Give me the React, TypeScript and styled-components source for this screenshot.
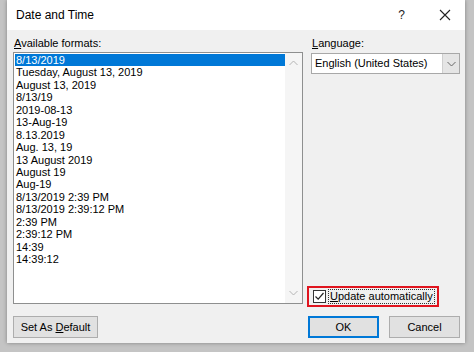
import React from 'react';
import styled, { createGlobalStyle } from 'styled-components';

const formats = [
  '8/13/2019',
  'Tuesday, August 13, 2019',
  'August 13, 2019',
  '8/13/19',
  '2019-08-13',
  '13-Aug-19',
  '8.13.2019',
  'Aug. 13, 19',
  '13 August 2019',
  'August 19',
  'Aug-19',
  '8/13/2019 2:39 PM',
  '8/13/2019 2:39:12 PM',
  '2:39 PM',
  '2:39:12 PM',
  '14:39',
  '14:39:12',
];

function Chevron({ up }: { up?: boolean }) {
  return (
    <svg width="9" height="6" viewBox="0 0 9 6">
      <path
        d={up ? 'M0.5 5 L4.5 1 L8.5 5' : 'M0.5 1 L4.5 5 L8.5 1'}
        fill="none"
        stroke="currentColor"
        strokeWidth="1"
      />
    </svg>
  );
}

function App() {
  return (
    <>
      <GlobalStyle />
      <Page>
        <Dialog>
          <TitleBar>
            <Title>Date and Time</Title>
            <TitleButtons>
              <HelpGlyph>?</HelpGlyph>
              <svg width="12" height="12" viewBox="0 0 12 12">
                <path d="M1 1 L11 11 M11 1 L1 11" stroke="#222" strokeWidth="1.1" />
              </svg>
            </TitleButtons>
          </TitleBar>
          <Body>
            <Main>
              <LeftColumn>
                <Label>
                  <u>A</u>vailable formats:
                </Label>
                <ListBox>
                  <Items>
                    {formats.map((f, i) => (
                      <Item key={f} selected={i === 0}>
                        {f}
                      </Item>
                    ))}
                  </Items>
                  <ScrollBar>
                    <Chevron up />
                    <Chevron />
                  </ScrollBar>
                </ListBox>
              </LeftColumn>
              <RightColumn>
                <Label>
                  <u>L</u>anguage:
                </Label>
                <Select>
                  <SelectValue>English (United States)</SelectValue>
                  <DropButton>
                    <Chevron />
                  </DropButton>
                </Select>
                <Spacer />
                <Highlight>
                  <CheckBox>
                    <svg width="11" height="11" viewBox="0 0 11 11">
                      <path d="M1.5 5.5 L4.2 8.2 L9.5 2" fill="none" stroke="#222" strokeWidth="1.2" />
                    </svg>
                  </CheckBox>
                  <FocusLabel>
                    <u>U</u>pdate automatically
                  </FocusLabel>
                </Highlight>
              </RightColumn>
            </Main>
            <Footer>
              <Button width={85}>
                <span>
                  Set As <u>D</u>efault
                </span>
              </Button>
              <ButtonGroup>
                <Button width={71} primary>
                  OK
                </Button>
                <Button width={71}>Cancel</Button>
              </ButtonGroup>
            </Footer>
          </Body>
        </Dialog>
      </Page>
    </>
  );
}

export default App;

const GlobalStyle = createGlobalStyle`
  html, body {
    margin: 0;
    padding: 0;
  }
  body {
    font-family: "Liberation Sans", Arial, sans-serif;
    font-size: 11px;
    color: #000;
  }
  u {
    text-decoration-thickness: 1px;
    text-underline-offset: 1px;
  }
`;

const Page = styled.div`
  width: 474px;
  height: 352px;
  background: #c4c4c4;
  overflow: hidden;
  display: flex;
`;

const Dialog = styled.div`
  margin-left: 7px;
  width: 458px;
  height: 343px;
  background: #f0f0f0;
  display: flex;
  flex-direction: column;
  box-shadow: 0 0 4px rgba(0, 0, 0, 0.35);
`;

const TitleBar = styled.div`
  height: 30px;
  background: #fff;
  display: flex;
  align-items: center;
  justify-content: space-between;
  padding: 0 14px 0 9px;
`;

const Title = styled.div`
  font-size: 12px;
  color: #000;
`;

const TitleButtons = styled.div`
  display: flex;
  align-items: center;
  gap: 34px;
`;

const HelpGlyph = styled.span`
  font-size: 12px;
  color: #222;
`;

const Body = styled.div`
  flex: 1;
  display: flex;
  flex-direction: column;
  padding: 7px 5px 5px 6px;
`;

const Main = styled.div`
  height: 270px;
  display: flex;
  gap: 8px;
`;

const LeftColumn = styled.div`
  width: 290px;
  display: flex;
  flex-direction: column;
`;

const RightColumn = styled.div`
  flex: 1;
  display: flex;
  flex-direction: column;
`;

const Label = styled.div`
  height: 15px;
  line-height: 13px;
  padding-left: 1px;
`;

const ListBox = styled.div`
  height: 252px;
  box-sizing: border-box;
  border: 1px solid #8e8f8f;
  background: #fff;
  display: flex;
`;

const Items = styled.div`
  flex: 1;
  padding: 1px 0 0 1px;
`;

const Item = styled.div<{ selected?: boolean }>`
  height: 12.45px;
  line-height: 12.45px;
  padding-left: 1px;
  white-space: nowrap;
  background: ${({ selected }) => (selected ? '#0078d7' : 'transparent')};
  color: ${({ selected }) => (selected ? '#fff' : '#000')};
`;

const ScrollBar = styled.div`
  width: 17px;
  background: #f5f5f5;
  display: flex;
  flex-direction: column;
  align-items: center;
  justify-content: space-between;
  padding: 7px 0 7px;
  color: #b4b4b4;
`;

const Select = styled.div`
  height: 21px;
  box-sizing: border-box;
  border: 1px solid #a8a8a8;
  background: #fff;
  display: flex;
  margin-top: 1px;
`;

const SelectValue = styled.div`
  flex: 1;
  line-height: 19px;
  padding-left: 3px;
  white-space: nowrap;
`;

const DropButton = styled.div`
  width: 16px;
  background: #e5e5e5;
  border-left: 1px solid #cfcfcf;
  display: flex;
  align-items: center;
  justify-content: center;
  color: #666;
`;

const Spacer = styled.div`
  flex: 1;
`;

const Highlight = styled.div`
  align-self: flex-start;
  margin-left: -4px;
  height: 21px;
  box-sizing: border-box;
  border: 2px solid #e0141e;
  display: flex;
  align-items: center;
  padding: 0 2px 0 4px;
  gap: 2px;
`;

const CheckBox = styled.div`
  width: 13px;
  height: 13px;
  box-sizing: border-box;
  border: 1px solid #333;
  background: #fff;
  display: flex;
  align-items: center;
  justify-content: center;
`;

const FocusLabel = styled.div`
  border: 1px dotted #333;
  padding: 0 1px;
  line-height: 13px;
  white-space: nowrap;
`;

const Footer = styled.div`
  margin-top: 9px;
  display: flex;
  justify-content: space-between;
  align-items: center;
`;

const ButtonGroup = styled.div`
  display: flex;
  gap: 10px;
`;

const Button = styled.div<{ width: number; primary?: boolean }>`
  width: ${({ width }) => width}px;
  height: 22px;
  box-sizing: border-box;
  border: ${({ primary }) => (primary ? '2px solid #0078d7' : '1px solid #adadad')};
  background: #e1e1e1;
  display: flex;
  align-items: center;
  justify-content: center;
  white-space: nowrap;
`;
